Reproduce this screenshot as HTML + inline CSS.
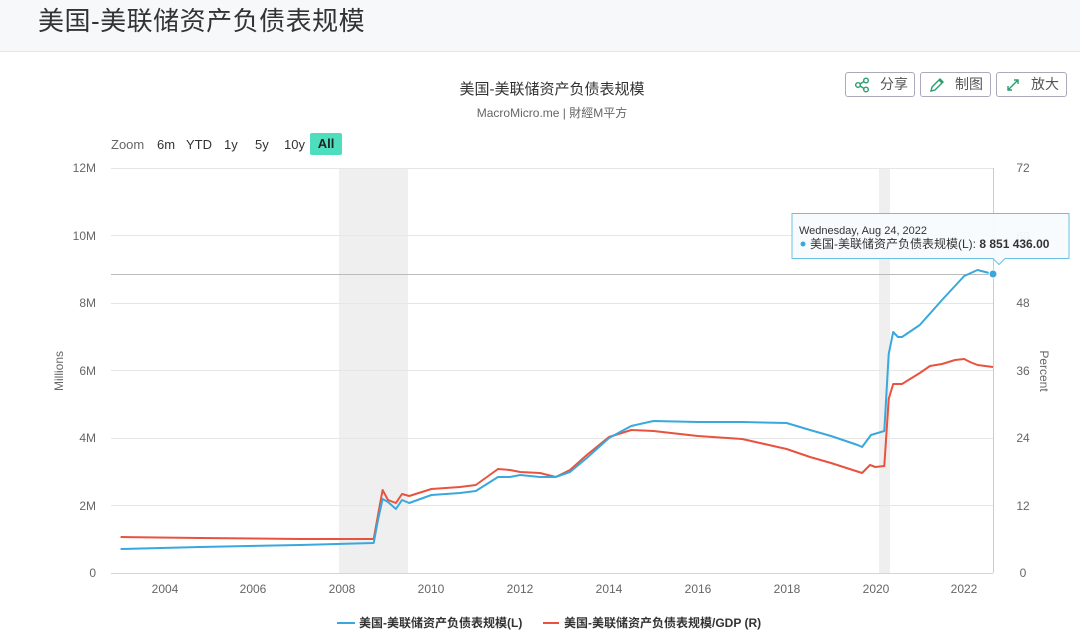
<!DOCTYPE html>
<html><head><meta charset="utf-8"><style>
body{margin:0;width:1080px;height:638px;background:#fff;font-family:"Liberation Sans","Noto Sans CJK SC",sans-serif;overflow:hidden;position:relative}
.hdr{position:absolute;left:0;top:0;width:1080px;height:51px;background:#f6f8fa;border-bottom:1px solid #e3e6ea}
.hdr div{position:absolute;left:38px;top:1px;font-size:26px;color:#333;letter-spacing:0.5px}
.btn{position:absolute;top:72px;height:25px;border:1px solid #aab;border-radius:3px;font-size:14px;color:#555;box-sizing:border-box;line-height:23px}
.btn svg{position:absolute;left:8px;top:4px}
.btn span{position:absolute;left:34px}
.zoom{position:absolute;top:137px;font-size:13px;color:#333}
</style></head><body>
<div class="hdr"><div>美国-美联储资产负债表规模</div></div>
<div class="btn" style="left:845px;width:70px"><svg width="16" height="16" viewBox="0 0 16 16" fill="none" stroke="#2a9d6f" stroke-width="1.4"><circle cx="4" cy="8" r="2.3"/><circle cx="12" cy="3.5" r="2.3"/><circle cx="12" cy="12.5" r="2.3"/><path d="M6 7l4-2.5M6 9l4 2.5"/></svg><span>分享</span></div>
<div class="btn" style="left:920px;width:71px"><svg width="16" height="16" viewBox="0 0 16 16" fill="none" stroke="#2a9d6f" stroke-width="1.4"><path d="M2 14l1-4 8-8 3 3-8 8z M10 3l3 3"/></svg><span>制图</span></div>
<div class="btn" style="left:996px;width:71px"><svg width="16" height="16" viewBox="0 0 16 16" fill="none" stroke="#2a9d6f" stroke-width="1.4"><path d="M3 13L13 3M9 3h4v4M3 9v4h4"/></svg><span>放大</span></div>
<div style="position:absolute;left:0;width:1104px;top:78px;text-align:center;font-size:15px;color:#333">美国-美联储资产负债表规模</div>
<div style="position:absolute;left:0;width:1104px;top:104px;text-align:center;font-size:12px;color:#666">MacroMicro.me | 財經M平方</div>
<div class="zoom" style="left:111px;color:#666">Zoom</div>
<div class="zoom" style="left:157px">6m</div>
<div class="zoom" style="left:186px">YTD</div>
<div class="zoom" style="left:224px">1y</div>
<div class="zoom" style="left:255px">5y</div>
<div class="zoom" style="left:284px">10y</div>
<div style="position:absolute;left:310px;top:133px;width:32px;height:22px;background:#4ddfbd;border-radius:2px;font-size:13px;font-weight:bold;color:#222;text-align:center;line-height:22px">All</div>
<svg style="position:absolute;left:0;top:0" width="1080" height="638" font-family="Liberation Sans, sans-serif">
<rect x="339" y="168" width="69" height="405" fill="#efefef"/>
<rect x="879" y="168" width="11" height="405" fill="#efefef"/>
<g stroke="#e6e6e6" stroke-width="1">
<path d="M111 168.5H993M111 235.5H993M111 303.5H993M111 370.5H993M111 438.5H993M111 505.5H993"/>
</g>
<path d="M111 573.5H993" stroke="#ccd6eb"/>
<path d="M993.5 168V573" stroke="#ccc"/>
<path d="M111 274.5H993" stroke="#bbb"/>
<g font-size="12" fill="#666" text-anchor="end">
<text x="96" y="172">12M</text><text x="96" y="240">10M</text><text x="96" y="307">8M</text><text x="96" y="375">6M</text><text x="96" y="442">4M</text><text x="96" y="510">2M</text><text x="96" y="577">0</text>
</g>
<g font-size="12" fill="#666" text-anchor="middle">
<text x="1023" y="172">72</text><text x="1023" y="240">60</text><text x="1023" y="307">48</text><text x="1023" y="375">36</text><text x="1023" y="442">24</text><text x="1023" y="510">12</text><text x="1023" y="577">0</text>
<text x="165" y="593">2004</text><text x="253" y="593">2006</text><text x="342" y="593">2008</text><text x="431" y="593">2010</text><text x="520" y="593">2012</text><text x="609" y="593">2014</text><text x="698" y="593">2016</text><text x="787" y="593">2018</text><text x="876" y="593">2020</text><text x="964" y="593">2022</text>
</g>
<text transform="translate(63,371) rotate(-90)" font-size="12" fill="#666" text-anchor="middle">Millions</text>
<text transform="translate(1040,371) rotate(90)" font-size="12" fill="#666" text-anchor="middle">Percent</text>
<polyline fill="none" stroke="#e8533f" stroke-width="2" stroke-linejoin="round" points="120.6,537 200,538 300,539 373.7,539 378,515 382.6,490 388,500 395.9,503 402,494 409.2,496 431.4,489 460,487 475.8,485 498,469 510,470 520.2,472 540,473 555.7,477 570,470 586.8,455 609,437 631.2,430 653.4,431 697.8,436 742.2,439 786.6,449 810,457 831,463 862.1,473 870,465 875.4,467 884.3,466 888.7,399 893.2,384 902,384 919.8,373 930,366 942,364 955,360 964.2,359 970,362 977.5,365 993,367"/>
<polyline fill="none" stroke="#3aa8dc" stroke-width="2" stroke-linejoin="round" points="120.6,549 200,547 300,545 373.7,543 378,520 382.6,499 388,502 395.9,509 402,500 409.2,503 431.4,495 460,493 475.8,491 498,477 510,477 520.2,475 540,477 555.7,477 570,472 586.8,458 609,438 631.2,426 653.4,421 697.8,422 742.2,422 786.6,423 810,430 831,436 857.6,445 862.1,447 871,435 884.3,431 888.7,354 893.2,332 898,337 902,337 919.8,325 942,300 964.2,276 977.5,270 993,274"/>
<circle cx="993" cy="274" r="4" fill="#3aa8dc" stroke="#fff"/>
<path d="M792 213.5h277v45h-64l-6 6-6-6H792z" fill="#f7fbfd" fill-opacity="0.95" stroke="#6ac1e2"/>
<text x="799" y="234" font-size="11" fill="#333">Wednesday, Aug 24, 2022</text>
<circle cx="803" cy="244" r="2.5" fill="#3aa8dc"/>
<text x="810" y="248" font-size="12" fill="#333" font-family="Liberation Sans, Noto Sans CJK SC, sans-serif">美国-美联储资产负债表规模(L): <tspan font-weight="bold">8 851 436.00</tspan></text>
<path d="M337 623h18" stroke="#3aa8dc" stroke-width="2"/>
<text x="359" y="627" font-size="12" font-weight="bold" fill="#333" font-family="Liberation Sans, Noto Sans CJK SC, sans-serif">美国-美联储资产负债表规模(L)</text>
<path d="M543 623h16" stroke="#e8533f" stroke-width="2"/>
<text x="564" y="627" font-size="12" font-weight="bold" fill="#333" font-family="Liberation Sans, Noto Sans CJK SC, sans-serif">美国-美联储资产负债表规模/GDP (R)</text>
</svg>
</body></html>
